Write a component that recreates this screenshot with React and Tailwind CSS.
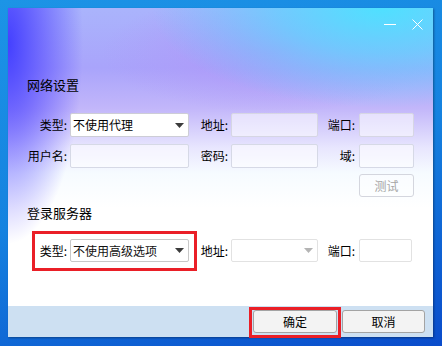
import React from "react";

const font = { fontFamily: '"Microsoft YaHei", "Noto Sans CJK SC", "Noto Sans", sans-serif' };

function Arrow({ color = "#3c3c3c" }) {
  return (
    <svg width="9" height="5" viewBox="0 0 9 5" className="shrink-0">
      <polygon points="0,0 9,0 4.5,5" fill={color} />
    </svg>
  );
}

function Label({ w, children }) {
  return (
    <div className={`${w} shrink-0 text-right text-[12px] leading-[16px] text-black`}>{children}</div>
  );
}

export default function App() {
  return (
    <div
      className="w-[442px] h-[346px] overflow-hidden bg-[linear-gradient(165deg,#1c94e6_0%,#1582e0_50%,#0a4ccb_100%)] pl-[8px] pt-[8px]"
      style={font}
    >
      <div className="relative w-[425px] h-[329px] flex flex-col bg-white shadow-[1px_1px_2px_rgba(0,0,0,0.35)]">
        <div className="flex-1 flex flex-col bg-[radial-gradient(ellipse_75px_200px_at_0%_12%,#4440ff_0%,rgba(80,70,255,0.6)_45%,rgba(120,110,255,0)_100%),radial-gradient(ellipse_230px_100px_at_88%_0%,#4fe0ff_0%,rgba(90,215,255,0.7)_45%,rgba(120,200,255,0)_100%),radial-gradient(ellipse_170px_60px_at_62%_45px,rgba(176,150,248,0.9)_0%,rgba(176,150,248,0)_100%),linear-gradient(180deg,#aab4fc_0px,#a9a4fb_60px,#c2b6fa_100px,#e8e6fe_140px,#f6fbff_165px,#ffffff_200px)]">
          {/* title bar */}
          <div className="h-[33px] flex items-center justify-end pr-[10px] gap-[16px]">
            <div className="w-[12px] h-[1px] bg-white" />
            <svg width="11" height="11" viewBox="0 0 11 11">
              <path d="M0.5 0.5 L10.5 10.5 M10.5 0.5 L0.5 10.5" stroke="white" strokeWidth="1" />
            </svg>
          </div>

          <div className="mt-[35px] pl-[19px] text-[13px] leading-[17px] text-black">网络设置</div>

          {/* row 1 */}
          <div className="mt-[20px] pl-[19px] flex items-center h-[24px]">
            <Label w="w-[40px]">类型:</Label>
            <div className="ml-[3px] w-[119px] h-[24px] bg-white border border-[#cdcdd6] rounded-[2px] flex items-center justify-between pl-[2px] pr-[4px] text-[12px] text-black">
              <span>不使用代理</span>
              <Arrow />
            </div>
            <Label w="w-[39px]">地址:</Label>
            <div className="ml-[3px] w-[87px] h-[24px] bg-white/55 border border-[#d6d6e4] rounded-[2px]" />
            <Label w="w-[37px]">端口:</Label>
            <div className="ml-[4px] w-[55px] h-[24px] bg-white/55 border border-[#d6d6e4] rounded-[2px]" />
          </div>

          {/* row 2 */}
          <div className="mt-[7px] pl-[19px] flex items-center h-[24px]">
            <Label w="w-[40px]">用户名:</Label>
            <div className="ml-[3px] w-[119px] h-[24px] bg-white/55 border border-[#d6d9e6] rounded-[2px]" />
            <Label w="w-[39px]">密码:</Label>
            <div className="ml-[3px] w-[87px] h-[24px] bg-white/55 border border-[#d6d9e6] rounded-[2px]" />
            <Label w="w-[37px]">域:</Label>
            <div className="ml-[4px] w-[55px] h-[24px] bg-white/55 border border-[#d6d9e6] rounded-[2px]" />
          </div>

          {/* test button */}
          <div className="mt-[6px] flex justify-end pr-[19px]">
            <div className="w-[55px] h-[23px] border border-[#d4d6de] bg-white/40 rounded-[3px] flex items-center justify-center text-[12px] text-[#a6a6a6]">
              测试
            </div>
          </div>

          <div className="mt-[7px] pl-[19px] text-[13px] leading-[17px] text-black">登录服务器</div>

          {/* row 3 */}
          <div className="mt-[18px] pl-[19px] flex items-center h-[23px]">
            <Label w="w-[40px]">类型:</Label>
            <div className="ml-[3px] w-[119px] h-[23px] bg-white border border-[#c8c8c8] rounded-[2px] flex items-center justify-between pl-[2px] pr-[4px] text-[12px] text-[#111]">
              <span>不使用高级选项</span>
              <Arrow />
            </div>
            <Label w="w-[39px]">地址:</Label>
            <div className="ml-[3px] w-[87px] h-[23px] bg-white border border-[#e2e2e2] rounded-[2px] flex items-center justify-end pr-[4px]">
              <Arrow color="#b4b4b4" />
            </div>
            <Label w="w-[37px]">端口:</Label>
            <div className="ml-[4px] w-[53px] h-[23px] bg-white border border-[#e2e2e2] rounded-[2px]" />
          </div>
        </div>

        {/* footer */}
        <div className="h-[31px] shrink-0 bg-[#cde0f2] flex items-center justify-end pr-[8px] gap-[5px]">
          <div className="w-[84px] h-[23px] bg-[#f3f3f3] border border-[#a3a3a3] rounded-[3px] flex items-center justify-center text-[12px] text-black">
            确定
          </div>
          <div className="w-[83px] h-[23px] bg-[#f3f3f3] border border-[#a3a3a3] rounded-[3px] flex items-center justify-center text-[12px] text-black">
            取消
          </div>
        </div>

        {/* red annotation boxes */}
        <div className="absolute left-[24px] top-[223px] w-[165px] h-[40px] border-[3px] border-[#ea1f27] pointer-events-none" />
        <div className="absolute left-[241px] top-[299px] w-[92px] h-[31px] border-[3px] border-[#ea1f27] pointer-events-none" />
      </div>
    </div>
  );
}
